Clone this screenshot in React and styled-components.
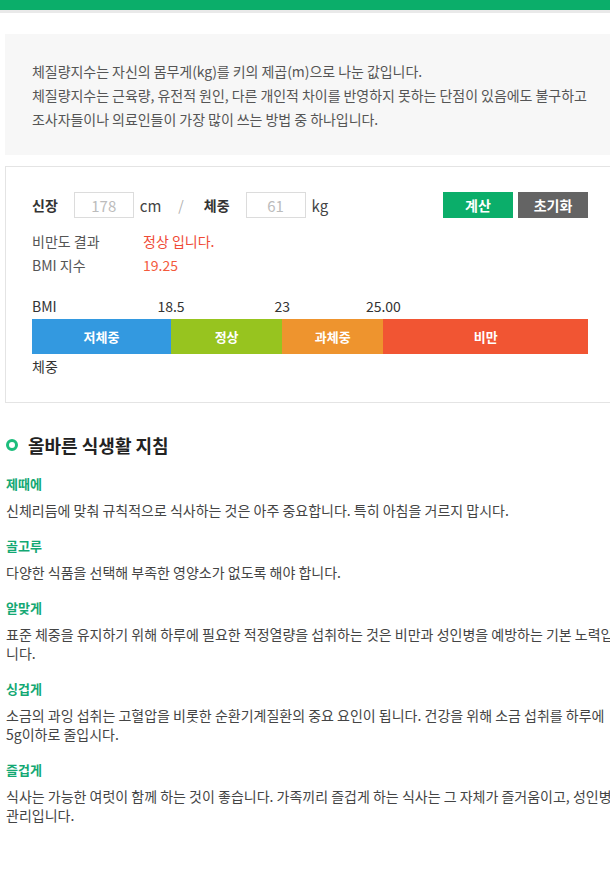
import React from "react";
import styled, { createGlobalStyle } from "styled-components";

const FONT = `"Noto Sans CJK KR", "Noto Sans", sans-serif`;
const COLS = "25% 20% 18.2% 1fr";

const GlobalStyle = createGlobalStyle`
  html, body {
    margin: 0;
    padding: 0;
    overflow-x: hidden;
    background: #fff;
  }
  body {
    font-family: ${FONT};
    color: #444;
  }
`;

const TopBar = styled.div`
  height: 10px;
  background: #0bae6a;
  border-bottom: 3px solid #e9e9e9;
`;

const Page = styled.div`
  width: 610px;
  margin-left: 5px;
  padding-top: 21px;
`;

const InfoBox = styled.div`
  background: #f7f7f7;
  padding: 25px 27px 24px;
  font-size: 14px;
  letter-spacing: -0.05px;
  line-height: 24px;
  color: #555;
  p {
    margin: 0;
  }
`;

const Calculator = styled.div`
  margin-top: 11px;
  border: 1px solid #e4e4e4;
  padding: 25px 26px 26px;
`;

const InputRow = styled.div`
  display: flex;
  align-items: center;
  height: 26px;
`;

const FieldLabel = styled.span`
  font-size: 14px;
  font-weight: 700;
  color: #333;
  margin-right: 16px;
`;

const NumInput = styled.input`
  box-sizing: border-box;
  width: 60px;
  height: 26px;
  border: 1px solid #dcdcdc;
  font-family: ${FONT};
  font-size: 15px;
  text-align: center;
  color: #333;
  padding: 0;
  outline: none;
  &::placeholder {
    color: #bcbcbc;
  }
`;

const Unit = styled.span`
  font-size: 15px;
  color: #444;
  margin-left: 6px;
`;

const Slash = styled.span`
  font-size: 14px;
  color: #b0b0b0;
  margin: 0 20px 0 17px;
`;

const Buttons = styled.div`
  margin-left: auto;
  display: flex;
  gap: 5px;
`;

const Button = styled.button`
  width: 70px;
  height: 26px;
  border: none;
  padding: 0;
  background: ${(p) => (p.$gray ? "#646464" : "#0bae6a")};
  color: #fff;
  font-family: ${FONT};
  font-size: 14px;
  font-weight: 700;
  cursor: pointer;
`;

const Results = styled.div`
  margin-top: 11px;
  display: grid;
  grid-template-columns: 111px 1fr;
  font-size: 14px;
  line-height: 24px;
  color: #555;
`;

const ResultValue = styled.span`
  color: ${(p) => (p.$light ? "#f35a3c" : "#ef4a36")};
`;

const Scale = styled.div`
  margin-top: 19px;
  display: grid;
  grid-template-columns: ${COLS};
  height: 20px;
  font-size: 14px;
  line-height: 20px;
  color: #333;
`;

const Tick = styled.span`
  justify-self: start;
  transform: ${(p) => (p.$center ? "translateX(-50%)" : "none")};
`;

const Bar = styled.div`
  margin-top: 3px;
  display: grid;
  grid-template-columns: ${COLS};
  height: 35px;
`;

const Segment = styled.div`
  background: ${(p) => p.$color};
  color: #fff;
  font-size: 13px;
  font-weight: 700;
  display: flex;
  align-items: center;
  justify-content: center;
`;

const ScaleFoot = styled.div`
  margin-top: 2px;
  font-size: 14px;
  line-height: 20px;
  color: #333;
`;

const Guide = styled.section`
  margin: 28px 0 0 1px;
`;

const GuideTitle = styled.h2`
  margin: 0 0 15px;
  display: flex;
  align-items: center;
  gap: 10px;
  height: 28px;
  font-size: 18px;
  font-weight: 700;
  color: #222;
`;

const Ring = styled.span`
  box-sizing: border-box;
  width: 12px;
  height: 12px;
  border: 3px solid #1cbd7c;
  border-radius: 50%;
`;

const Item = styled.div`
  margin-bottom: 16px;
`;

const ItemTitle = styled.h3`
  margin: 0 0 7px;
  font-size: 13px;
  line-height: 20px;
  font-weight: 700;
  color: #13a873;
`;

const ItemText = styled.p`
  margin: 0;
  font-size: 14px;
  line-height: 19px;
  color: #444;
`;

const guides = [
  {
    title: "제때에",
    text: "신체리듬에 맞춰 규칙적으로 식사하는 것은 아주 중요합니다. 특히 아침을 거르지 맙시다.",
  },
  {
    title: "골고루",
    text: "다양한 식품을 선택해 부족한 영양소가 없도록 해야 합니다.",
  },
  {
    title: "알맞게",
    text: "표준 체중을 유지하기 위해 하루에 필요한 적정열량을 섭취하는 것은 비만과 성인병을 예방하는 기본 노력입니다.",
  },
  {
    title: "싱겁게",
    text: "소금의 과잉 섭취는 고혈압을 비롯한 순환기계질환의 중요 요인이 됩니다. 건강을 위해 소금 섭취를 하루에 5g이하로 줄입시다.",
  },
  {
    title: "즐겁게",
    text: "식사는 가능한 여럿이 함께 하는 것이 좋습니다. 가족끼리 즐겁게 하는 식사는 그 자체가 즐거움이고, 성인병 관리입니다.",
  },
];

const segments = [
  { label: "저체중", color: "#3399e0" },
  { label: "정상", color: "#97c41f" },
  { label: "과체중", color: "#ee942e" },
  { label: "비만", color: "#f15533" },
];

const App = () => {
  return (
    <>
      <GlobalStyle />
      <TopBar />
      <Page>
        <InfoBox>
          <p>체질량지수는 자신의 몸무게(kg)를 키의 제곱(m)으로 나눈 값입니다.</p>
          <p>
            체질량지수는 근육량, 유전적 원인, 다른 개인적 차이를 반영하지 못하는
            단점이 있음에도 불구하고
          </p>
          <p>조사자들이나 의료인들이 가장 많이 쓰는 방법 중 하나입니다.</p>
        </InfoBox>

        <Calculator>
          <InputRow>
            <FieldLabel>신장</FieldLabel>
            <NumInput placeholder="178" />
            <Unit>cm</Unit>
            <Slash>/</Slash>
            <FieldLabel>체중</FieldLabel>
            <NumInput placeholder="61" />
            <Unit>kg</Unit>
            <Buttons>
              <Button>계산</Button>
              <Button $gray>초기화</Button>
            </Buttons>
          </InputRow>

          <Results>
            <span>비만도 결과</span>
            <ResultValue>정상 입니다.</ResultValue>
            <span>BMI 지수</span>
            <ResultValue $light>19.25</ResultValue>
          </Results>

          <Scale>
            <Tick>BMI</Tick>
            <Tick $center>18.5</Tick>
            <Tick $center>23</Tick>
            <Tick $center>25.00</Tick>
          </Scale>
          <Bar>
            {segments.map((s) => (
              <Segment key={s.label} $color={s.color}>
                {s.label}
              </Segment>
            ))}
          </Bar>
          <ScaleFoot>체중</ScaleFoot>
        </Calculator>

        <Guide>
          <GuideTitle>
            <Ring />
            올바른 식생활 지침
          </GuideTitle>
          {guides.map((g) => (
            <Item key={g.title}>
              <ItemTitle>{g.title}</ItemTitle>
              <ItemText>{g.text}</ItemText>
            </Item>
          ))}
        </Guide>
      </Page>
    </>
  );
};

export default App;
